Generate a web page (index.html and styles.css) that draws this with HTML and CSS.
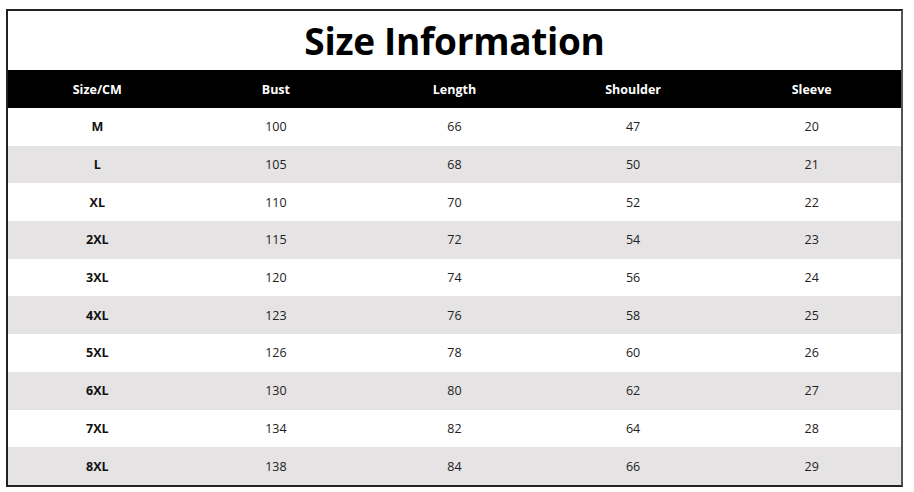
FILE: index.html
```html
<!DOCTYPE html>
<html>
<head>
<meta charset="utf-8">
<link rel="stylesheet" href="styles.css">
</head>
<body>
<div class="frame">
  <h1 class="title">Size Information</h1>
  <div class="grid">
    <div class="cell head">Size/CM</div><div class="cell head">Bust</div><div class="cell head">Length</div><div class="cell head">Shoulder</div><div class="cell head">Sleeve</div>
    <div class="cell size">M</div><div class="cell">100</div><div class="cell">66</div><div class="cell">47</div><div class="cell">20</div>
    <div class="cell size alt">L</div><div class="cell alt">105</div><div class="cell alt">68</div><div class="cell alt">50</div><div class="cell alt">21</div>
    <div class="cell size">XL</div><div class="cell">110</div><div class="cell">70</div><div class="cell">52</div><div class="cell">22</div>
    <div class="cell size alt">2XL</div><div class="cell alt">115</div><div class="cell alt">72</div><div class="cell alt">54</div><div class="cell alt">23</div>
    <div class="cell size">3XL</div><div class="cell">120</div><div class="cell">74</div><div class="cell">56</div><div class="cell">24</div>
    <div class="cell size alt">4XL</div><div class="cell alt">123</div><div class="cell alt">76</div><div class="cell alt">58</div><div class="cell alt">25</div>
    <div class="cell size">5XL</div><div class="cell">126</div><div class="cell">78</div><div class="cell">60</div><div class="cell">26</div>
    <div class="cell size alt">6XL</div><div class="cell alt">130</div><div class="cell alt">80</div><div class="cell alt">62</div><div class="cell alt">27</div>
    <div class="cell size">7XL</div><div class="cell">134</div><div class="cell">82</div><div class="cell">64</div><div class="cell">28</div>
    <div class="cell size alt">8XL</div><div class="cell alt">138</div><div class="cell alt">84</div><div class="cell alt">66</div><div class="cell alt">29</div>
  </div>
</div>
</body>
</html>
```
FILE: styles.css
```css
html, body {
  margin: 0;
  padding: 0;
  background: #ffffff;
}
body {
  padding: 9px 0 0 6px;
  font-family: "Open Sans", "Noto Sans", sans-serif;
  color: #222;
}
.frame {
  width: 893px;
  border: 2px solid #222;
  border-right-color: #555;
  background: #fff;
}
.title {
  margin: 0;
  height: 59px;
  display: flex;
  align-items: center;
  justify-content: center;
  font-size: 37px;
  font-weight: 700;
  color: #000;
  letter-spacing: -0.3px;
}
.grid {
  display: grid;
  grid-template-columns: repeat(5, 1fr);
  grid-template-rows: 38px repeat(10, 37.7px);
}
.cell {
  display: flex;
  align-items: center;
  justify-content: center;
  font-size: 12.5px;
  color: #222;
}
.head {
  background: #000;
  color: #fff;
  font-weight: 700;
}
.size {
  font-weight: 700;
  color: #111;
}
.alt {
  background: #e5e3e4;
}
```
